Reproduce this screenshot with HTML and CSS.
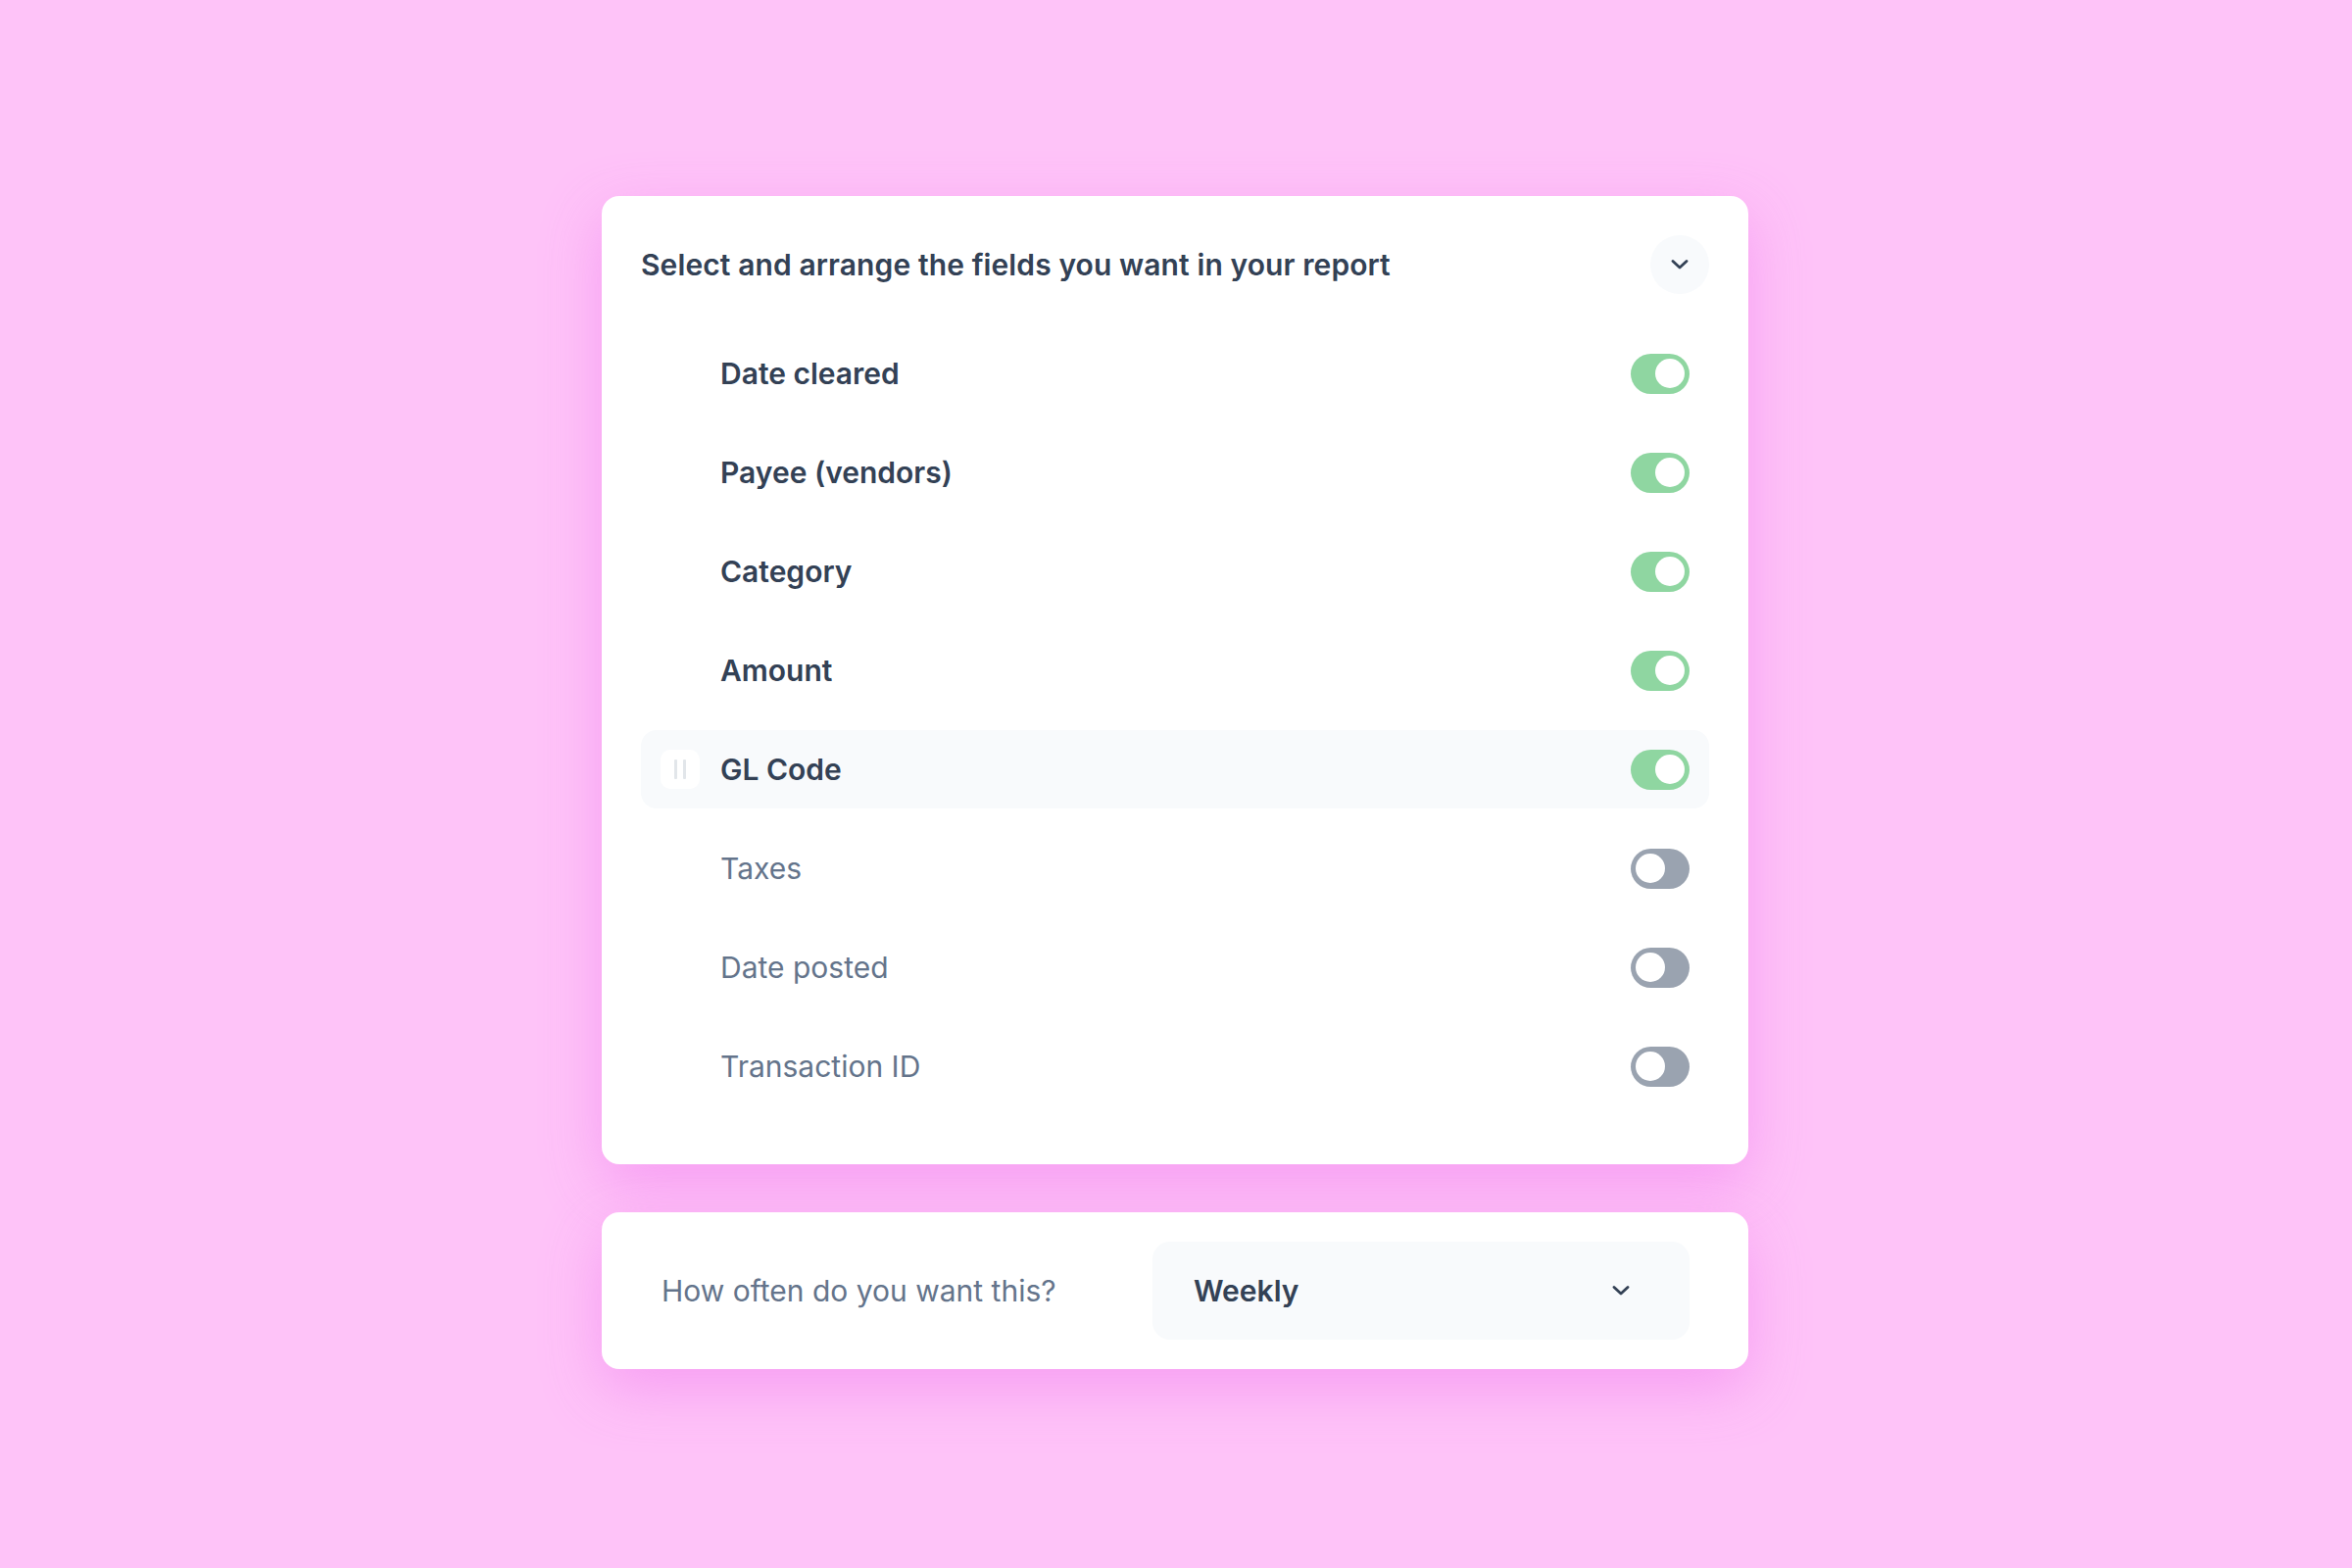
FILE: index.html
```html
<!DOCTYPE html>
<html lang="en">
<head>
<meta charset="utf-8">
<title>Report fields</title>
<link rel="stylesheet" href="styles.css">
</head>
<body>
<main class="stage">
  <section class="card fields-card">
    <header class="card-head">
      <h1 class="card-title">Select and arrange the fields you want in your report</h1>
      <button class="round-btn" aria-label="Collapse">
        <svg class="chev" viewBox="0 0 18 10" width="18" height="10"><path d="M2 1.5 L9 8 L16 1.5" fill="none" stroke="#334155" stroke-width="2.8" stroke-linecap="round" stroke-linejoin="round"/></svg>
      </button>
    </header>
    <ul class="field-list">
      <li class="field on"><span class="handle"></span><span class="field-name">Date cleared</span><span class="toggle on"><span class="knob"></span></span></li>
      <li class="field on"><span class="handle"></span><span class="field-name">Payee (vendors)</span><span class="toggle on"><span class="knob"></span></span></li>
      <li class="field on"><span class="handle"></span><span class="field-name">Category</span><span class="toggle on"><span class="knob"></span></span></li>
      <li class="field on"><span class="handle"></span><span class="field-name">Amount</span><span class="toggle on"><span class="knob"></span></span></li>
      <li class="field on active"><span class="handle"><i></i><i></i></span><span class="field-name">GL Code</span><span class="toggle on"><span class="knob"></span></span></li>
      <li class="field"><span class="handle"></span><span class="field-name">Taxes</span><span class="toggle"><span class="knob"></span></span></li>
      <li class="field"><span class="handle"></span><span class="field-name">Date posted</span><span class="toggle"><span class="knob"></span></span></li>
      <li class="field"><span class="handle"></span><span class="field-name">Transaction ID</span><span class="toggle"><span class="knob"></span></span></li>
    </ul>
  </section>
  <section class="card freq-card">
    <span class="freq-label">How often do you want this?</span>
    <div class="select">
      <span class="select-value">Weekly</span>
      <svg class="chev" viewBox="0 0 18 10" width="18" height="10"><path d="M2 1.5 L9 8 L16 1.5" fill="none" stroke="#334155" stroke-width="2.8" stroke-linecap="round" stroke-linejoin="round"/></svg>
    </div>
  </section>
</main>
</body>
</html>
```
FILE: styles.css
```css
* { box-sizing: border-box; }
html, body { margin: 0; padding: 0; }
body {
  background: #fec3f8;
  font-family: Inter, "Noto Sans", "Liberation Sans", sans-serif;
  color: #334155;
}
.stage {
  min-height: 100vh;
  display: flex;
  flex-direction: column;
  align-items: center;
  justify-content: flex-start;
  padding-top: 200px;
  padding-right: 2px;
  gap: 49px;
}
.card {
  width: 1170px;
  background: #ffffff;
  border-radius: 18px;
  box-shadow: 0 20px 60px rgba(238, 110, 235, 0.45);
}
.fields-card {
  padding: 40px 40px 39px 40px;
}
.card-head {
  display: flex;
  align-items: center;
  justify-content: space-between;
  height: 60px;
  margin-bottom: 41px;
}
.card-title {
  margin: 0;
  font-size: 30px;
  font-weight: 600;
  color: #334155;
  letter-spacing: 0.1px;
}
.round-btn {
  width: 60px;
  height: 60px;
  border: 0;
  border-radius: 50%;
  background: #f8fafc;
  display: flex;
  align-items: center;
  justify-content: center;
  padding: 0;
}
.field-list {
  list-style: none;
  margin: 0;
  padding: 0;
}
.field {
  display: flex;
  align-items: center;
  gap: 21px;
  height: 80px;
  margin-bottom: 21px;
  padding: 0 20px;
  border-radius: 16px;
}
.field.active { background: #f8fafc; }
.handle {
  width: 40px;
  height: 40px;
  border-radius: 10px;
  display: flex;
  align-items: center;
  justify-content: center;
  gap: 6px;
}
.field.active .handle { background: #ffffff; }
.handle i {
  display: block;
  width: 3px;
  height: 20px;
  background: #e2e6ea;
  border-radius: 1px;
}
.field-name {
  flex: 1;
  font-size: 30px;
  font-weight: 400;
  color: #64748b;
}
.field.on .field-name {
  font-weight: 600;
  color: #334155;
}
.toggle {
  position: relative;
  width: 60px;
  height: 41px;
  border-radius: 21px;
  background: #9aa3b0;
}
.toggle.on { background: #8fd6a1; }
.knob {
  position: absolute;
  top: 5.5px;
  left: 5px;
  width: 30px;
  height: 30px;
  border-radius: 50%;
  background: #ffffff;
}
.toggle.on .knob { left: 25px; }
.freq-card {
  display: flex;
  align-items: center;
  padding: 30px 60px 30px 61px;
}
.freq-label {
  flex: 1;
  font-size: 30px;
  color: #64748b;
}
.select {
  width: 548px;
  height: 100px;
  background: #f8fafc;
  border-radius: 18px;
  display: flex;
  align-items: center;
  justify-content: space-between;
  padding: 0 61px 0 42px;
}
.select-value {
  font-size: 30px;
  font-weight: 600;
  color: #334155;
}
```
